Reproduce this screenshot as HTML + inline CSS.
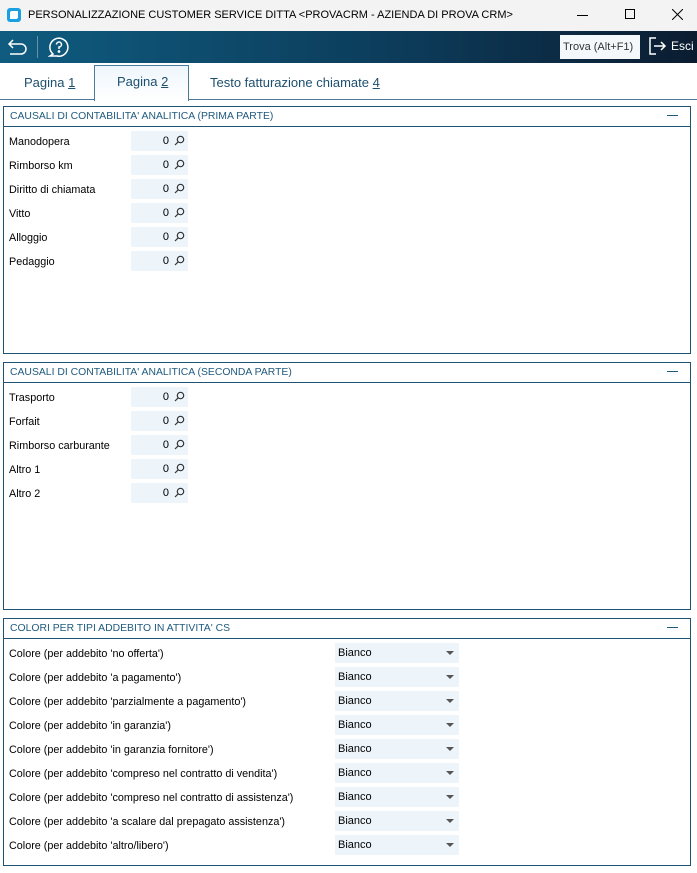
<!DOCTYPE html>
<html><head><meta charset="utf-8"><style>
*{margin:0;padding:0;box-sizing:border-box}
body{width:697px;height:873px;background:#fff;font-family:"Liberation Sans",sans-serif;position:relative;overflow:hidden;color:#000}
.title{position:absolute;left:0;top:0;width:697px;height:31px;background:#f3f3f3;font-size:11px}
.tb{position:absolute;left:0;top:31px;width:697px;height:32px;background:linear-gradient(90deg,#0f5c80,#0c3a58 60%,#0b1c30)}
.tab{position:absolute;top:75px;font-size:13px;color:#1d4f6e}
.panel{position:absolute;left:3px;width:688px;border:1px solid #1f5470}
.ph{height:20px;border-bottom:1px solid #1f5470;font-size:10.4px;color:#1f5a7e;padding:4px 0 0 6px;position:relative}
.ph:after{content:"";position:absolute;right:12px;top:8px;width:11px;height:1px;background:#1f5a7e}
.row{position:absolute;left:5px;font-size:10.8px}
.inp{position:absolute;left:127px;width:57px;height:20px;background:#edf5fb;font-size:11px}
.inp span{position:absolute;right:19px;top:4px}
.inp svg{position:absolute;right:3px;top:4px}
.cmb{position:absolute;left:331px;width:124px;height:20px;background:#edf5fb;font-size:11px;padding:4px 0 0 3px}
.cmb:after{content:"";position:absolute;right:5px;top:8px;border:4px solid transparent;border-top:4px solid #555;border-bottom:0}
</style></head><body>
<div class="title">
<div style="position:absolute;left:7px;top:8px;width:14px;height:14px;background:#1a9fe0;border-radius:3px"><div style="position:absolute;left:3px;top:3px;width:8px;height:8px;background:#fff;border-radius:2px 0 2px 0"></div></div>
<div style="position:absolute;left:28px;top:9px">PERSONALIZZAZIONE CUSTOMER SERVICE DITTA &lt;PROVACRM - AZIENDA DI PROVA CRM&gt;</div>
<div style="position:absolute;left:577px;top:15px;width:11px;height:1px;background:#000"></div>
<div style="position:absolute;left:625px;top:9px;width:10px;height:10px;border:1px solid #000"></div>
<svg style="position:absolute;left:672px;top:9px" width="11" height="11" viewBox="0 0 11 11" stroke="#000" stroke-width="1"><path d="M0 0 L11 11 M11 0 L0 11"/></svg>
</div>
<div class="tb">
<svg style="position:absolute;left:7px;top:6px" width="22" height="20" viewBox="0 0 22 20" fill="none" stroke="#fff" stroke-width="1.5"><path d="M6 3 L2 7 L6 11 M2 7 H14 A5 5 0 0 1 14 17 H3"/></svg>
<div style="position:absolute;left:37px;top:5px;width:1px;height:22px;background:#6a8ea6"></div>
<svg style="position:absolute;left:48px;top:5px" width="22" height="22" viewBox="0 0 22 22" fill="none" stroke="#fff" stroke-width="1.5"><path d="M5 18 A9 9 0 1 1 9 20 L2 20 Z"/><path d="M8.5 8.5 A2.5 2.5 0 1 1 11 11 V13"/><circle cx="11" cy="15.5" r=".6" fill="#fff"/></svg>
<div style="position:absolute;left:560px;top:4px;width:80px;height:24px;background:#f4f8fb;font-size:11px;color:#333;padding:6px 0 0 3px">Trova (Alt+F1)</div>
<svg style="position:absolute;left:648px;top:5px" width="20" height="20" viewBox="0 0 20 20" fill="none" stroke="#fff" stroke-width="1.5"><path d="M8 2 H2 V18 H8 M6 10 H17 M13 6 L17 10 L13 14"/></svg>
<div style="position:absolute;left:671px;top:8px;font-size:12px;color:#fff">Esci</div>
</div>
<div style="position:absolute;left:0;top:99px;width:697px;height:1px;background:#4b7d9b"></div>
<div style="position:absolute;left:94px;top:65px;width:95px;height:36px;border:1px solid #4b7d9b;border-bottom:none;background:linear-gradient(#eef6fc,#fff)"></div>
<div class="tab" style="left:24px">Pagina <u>1</u></div>
<div class="tab" style="left:117px;top:74px">Pagina <u>2</u></div>
<div class="tab" style="left:210px">Testo fatturazione chiamate <u>4</u></div>

<div class="panel" style="top:106px;height:248px"><div class="ph">CAUSALI DI CONTABILITA' ANALITICA (PRIMA PARTE)</div></div>
<div class="panel" style="top:362px;height:248px"><div class="ph">CAUSALI DI CONTABILITA' ANALITICA (SECONDA PARTE)</div></div>
<div class="panel" style="top:618px;height:248px"><div class="ph">COLORI PER TIPI ADDEBITO IN ATTIVITA' CS</div></div>

<div id="r"></div>
<script>
var h='';
function inp(y,t){h+='<div class="row" style="top:'+(y-5)+'px;left:9px">'+t+'</div><div class="inp" style="top:'+(y-10)+'px;left:131px"><span>0</span><svg width="11" height="11" viewBox="0 0 11 11" fill="none" stroke="#333" stroke-width="1.2"><circle cx="6.5" cy="4.5" r="3.2"/><path d="M4.2 6.8 L1 10"/></svg></div>';}
['Manodopera','Rimborso km','Diritto di chiamata','Vitto','Alloggio','Pedaggio'].forEach(function(t,i){inp(141+i*24,t)});
['Trasporto','Forfait','Rimborso carburante','Altro 1','Altro 2'].forEach(function(t,i){inp(397+i*24,t)});
["'no offerta'","'a pagamento'","'parzialmente a pagamento'","'in garanzia'","'in garanzia fornitore'","'compreso nel contratto di vendita'","'compreso nel contratto di assistenza'","'a scalare dal prepagato assistenza'","'altro/libero'"].forEach(function(t,i){var y=653+i*24;h+='<div class="row" style="top:'+(y-5)+'px;left:9px">Colore (per addebito '+t+')</div><div class="cmb" style="top:'+(y-10)+'px;left:335px">Bianco</div>';});
document.getElementById('r').innerHTML=h;
</script>
</body></html>
